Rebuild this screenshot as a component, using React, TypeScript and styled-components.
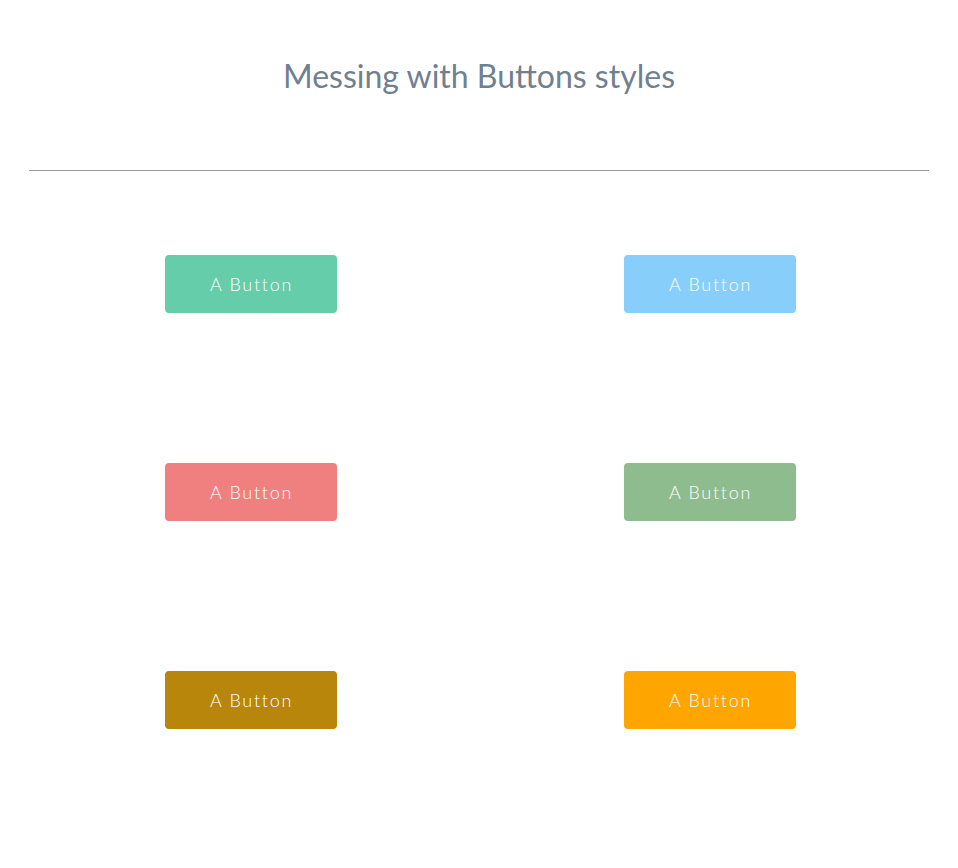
import React from "react";
import styled, { createGlobalStyle } from "styled-components";

const Global = createGlobalStyle`
  html, body { margin: 0; padding: 0; background: #fff; }
  body { font-family: Lato, "Open Sans", sans-serif; }
`;

const Page = styled.div`
  width: 958px;
  display: flex;
  flex-direction: column;
  align-items: center;
`;

const Title = styled.h1`
  margin: 56px 0 0;
  font-family: Lato, sans-serif;
  font-weight: 400;
  font-size: 32px;
  line-height: 40px;
  color: #708090;
  text-align: center;
`;

const Rule = styled.hr`
  width: 900px;
  margin: 74px 0 0;
  border: 0;
  border-top: 1px solid #9a9a9a;
`;

const Grid = styled.div`
  display: grid;
  grid-template-columns: repeat(2, 459px);
  grid-auto-rows: 208px;
  margin: 84px 0 0 3px;
  justify-items: center;
`;

const Button = styled.button<{ $bg: string }>`
  width: 172px;
  height: 58px;
  border: 0;
  border-radius: 4px;
  background: ${(p) => p.$bg};
  color: #fff;
  font-family: Lato, sans-serif;
  font-weight: 300;
  font-size: 18px;
  letter-spacing: 1.7px;
  cursor: pointer;
  padding: 0 0 0 1px;
`;

const colors = ["#66CDAA", "#87CEFA", "#F08080", "#8FBC8F", "#B8860B", "#FFA500"];

export default function App() {
  return (
    <Page>
      <Global />
      <Title>Messing with Buttons styles</Title>
      <Rule />
      <Grid>
        {colors.map((c) => (
          <div key={c}>
            <Button $bg={c}>A Button</Button>
          </div>
        ))}
      </Grid>
    </Page>
  );
}
